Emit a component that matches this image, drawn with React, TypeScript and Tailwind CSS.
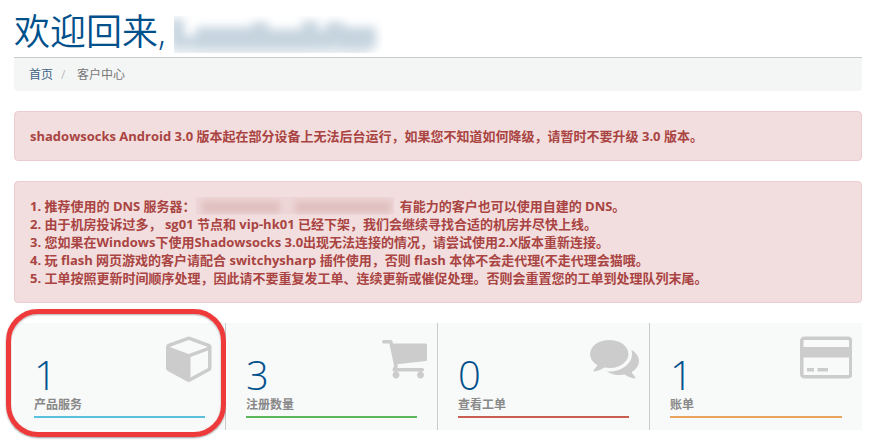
import type { ReactNode } from "react";

type IconProps = { width: number; path: string };

const CUBE =
  "M896 1629l640-349v-636l-640 233v752zm-64-865l698-254-698-254-698 254zm832-252v768q0 35-18 65t-49 47l-704 384q-28 16-61 16t-61-16l-704-384q-31-17-49-47t-18-65v-768q0-40 23-73t61-47l704-256q22-8 44-8t44 8l704 256q38 14 61 47t23 73z";
const CART =
  "M640 1536q0 52-38 90t-90 38-90-38-38-90 38-90 90-38 90 38 38 90zm896 0q0 52-38 90t-90 38-90-38-38-90 38-90 90-38 90 38 38 90zm128-1088v512q0 24-16.500 42.500t-40.500 21.500l-1044 122q13 60 13 70 0 16-24 64h920q26 0 45 19t19 45-19 45-45 19h-1024q-26 0-45-19t-19-45q0-11 8-31.500t16-36 21.500-40 15.500-29.500l-177-823h-204q-26 0-45-19t-19-45 19-45 45-19h256q16 0 28.500 6.500t19.500 15.500 13 24.500 8 26 5.500 29.500 4.500 26h1201q26 0 45 19t19 45z";
const COMMENTS =
  "M1408 768q0 139-94 257t-256.500 186.500-353.500 68.500q-86 0-176-16-124 88-278 128-36 9-86 16h-3q-11 0-20.500-8t-11.500-21q-1-3-1-6.500t.5-6.500 2-6l2.500-5 3.500-5.500 4-5 4.500-5 4-4.500q5-6 23-25t26-29.500 22.500-29 25-38.500 20.500-44q-124-72-195-177t-71-224q0-139 94-257t256.500-186.500 353.500-68.500 353.500 68.500 256.500 186.500 94 257zm384 256q0 120-71 224.500t-195 176.500q10 24 20.500 44t25 38.500 22.500 29 26 29.500 23 25q1 1 4 4.500t4.500 5 4 5 3.500 5.500l2.500 5 2 6 .5 6.500-1 6.500q-3 14-13 22t-22 7q-50-7-86-16-154-40-278-128-90 16-176 16-271 0-472-132 58 4 88 4 161 0 309-45t264-129q125-92 192-212t67-254q0-77-23-152 129 71 204 178t75 230z";
const CARD =
  "M1760 128q66 0 113 47t47 113v1216q0 66-47 113t-113 47h-1600q-66 0-113-47t-47-113v-1216q0-66 47-113t113-47h1600zm-1600 128q-13 0-22.500 9.500t-9.500 22.500v224h1664v-224q0-13-9.500-22.500t-22.500-9.500h-1600zm1600 1280q13 0 22.500-9.500t9.500-22.500v-608h-1664v608q0 13 9.500 22.500t22.500 9.500h1600zm-1504-128v-128h256v128h-256zm384 0v-128h384v128h-384z";

function Icon({ width, path }: IconProps) {
  return (
    <svg
      viewBox={`0 0 ${width} 1792`}
      className="-mr-2.5 h-[49px] w-auto shrink-0 fill-[#cccccc]"
      aria-hidden="true"
    >
      <path d={path} />
    </svg>
  );
}

function Alert({ children }: { children: ReactNode }) {
  return (
    <div
      role="alert"
      className="mt-5 rounded border border-[#ebccd1] bg-[#f2dede] p-[15px] text-[13px] leading-[18px] font-bold text-[#a94442]"
    >
      {children}
    </div>
  );
}

const stats = [
  { count: 1, label: "产品服务", bar: "bg-[#5bc0de]", width: 1792, path: CUBE, highlighted: true },
  { count: 3, label: "注册数量", bar: "bg-[#5cb85c]", width: 1664, path: CART },
  { count: 0, label: "查看工单", bar: "bg-[#c9604f]", width: 1792, path: COMMENTS },
  { count: 1, label: "账单", bar: "bg-[#e8a35c]", width: 1920, path: CARD },
];

export default function App() {
  return (
    <main className="bg-white pt-3 pr-2 pb-2.5 pl-3.5 font-['Open_Sans','Noto_Sans_CJK_SC',sans-serif]">
      <h1 className="flex h-[45px] items-start gap-2 text-4xl leading-10 font-[350] text-[#00508c]">
        <span>欢迎回来,</span>
        <svg className="mt-1 h-[37px] w-[209px]" viewBox="0 0 209 37" aria-hidden="true">
          <defs>
            <filter id="smear" x="-10%" y="-50%" width="120%" height="200%">
              <feGaussianBlur stdDeviation="5" />
            </filter>
          </defs>
          <g filter="url(#smear)" fill="#c6d4df">
            <rect x="-4" y="3" width="14" height="28" />
            <rect x="4" y="20" width="20" height="11" />
            <rect x="22" y="11" width="68" height="21" />
            <rect x="44" y="26" width="12" height="14" />
            <rect x="78" y="6" width="16" height="25" />
            <rect x="88" y="13" width="50" height="19" />
            <rect x="128" y="5" width="16" height="26" />
            <rect x="140" y="14" width="16" height="18" />
            <rect x="152" y="6" width="18" height="25" />
            <rect x="166" y="11" width="36" height="21" />
            <rect x="-4" y="32" width="200" height="8" fill="#e3ebf0" />
          </g>
        </svg>
      </h1>

      <nav
        aria-label="breadcrumb"
        className="rounded-b border-t border-[#c8cccc] bg-[#f4f6f6] px-[15px] py-2 text-xs leading-[17px]"
      >
        <ol className="flex">
          <li>
            <a href="#home" className="text-[#3d6385]">首页</a>
          </li>
          <li aria-hidden="true" className="w-6 pl-2 text-[#bbbbbb]">/</li>
          <li className="text-[#777777]">客户中心</li>
        </ol>
      </nav>

      <Alert>shadowsocks Android 3.0 版本起在部分设备上无法后台运行，如果您不知道如何降级，请暂时不要升级 3.0 版本。</Alert>

      <Alert>
        <p>
          1. 推荐使用的 DNS 服务器：
          <svg
            className="mr-1.5 inline-block h-[18px] w-[198px] align-top"
            viewBox="0 0 198 18"
            aria-hidden="true"
          >
            <defs>
              <filter id="softSmear" x="-10%" y="-50%" width="120%" height="200%">
                <feGaussianBlur stdDeviation="3" />
              </filter>
            </defs>
            <rect width="198" height="17" fill="#eed6d6" />
            <g filter="url(#softSmear)" fill="#e0bfbf">
              <rect x="6" y="4" width="78" height="12" />
              <rect x="99" y="4" width="96" height="12" />
            </g>
          </svg>
          有能力的客户也可以使用自建的 DNS。
        </p>
        <p>2. 由于机房投诉过多， sg01 节点和 vip-hk01 已经下架，我们会继续寻找合适的机房并尽快上线。</p>
        <p>3. 您如果在Windows下使用Shadowsocks 3.0出现无法连接的情况，请尝试使用2.X版本重新连接。</p>
        <p>4. 玩 flash 网页游戏的客户请配合 switchysharp 插件使用，否则 flash 本体不会走代理(不走代理会猫哦。</p>
        <p>5. 工单按照更新时间顺序处理，因此请不要重复发工单、连续更新或催促处理。否则会重置您的工单到处理队列末尾。</p>
      </Alert>

      <section className="mt-5 grid grid-cols-4">
        {stats.map((s) => (
          <div
            key={s.label}
            className="relative border-r border-[#c8cacc] bg-[#f8f9f9] px-5 pt-2.5 pb-3 last:border-r-0"
          >
            <div className="flex items-start justify-between">
              <div className="pt-5 text-[40px] leading-[43px] font-[350] text-[#00508c]">{s.count}</div>
              <Icon width={s.width} path={s.path} />
            </div>
            <div className="text-xs leading-[18px] font-bold text-[#888888]">{s.label}</div>
            <div className={`mt-0.5 h-0.5 ${s.bar}`} />
            {s.highlighted && (
              <div className="pointer-events-none absolute -top-3.5 -right-px -bottom-[7px] -left-2 rounded-[32px] border-[5px] border-[#ee3a3a] shadow-[0_1px_2px_rgba(0,0,0,0.4),inset_0_1px_2px_rgba(0,0,0,0.3)]" />
            )}
          </div>
        ))}
      </section>
    </main>
  );
}
